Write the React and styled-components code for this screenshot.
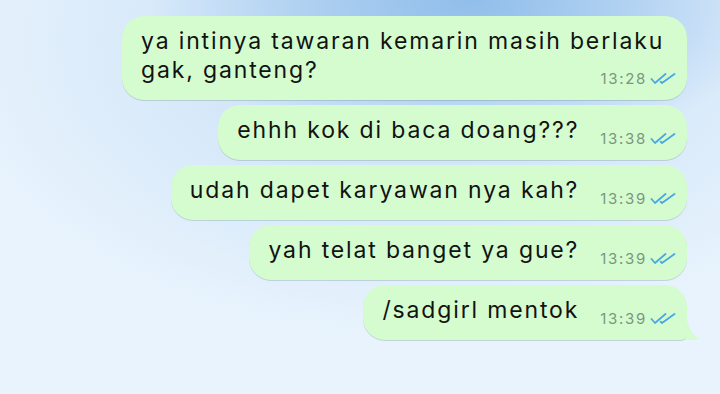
import React from "react";
import styled, { createGlobalStyle } from "styled-components";

const Global = createGlobalStyle`
  html, body { margin: 0; padding: 0; }
  body {
    width: 720px;
    height: 394px;
    overflow: hidden;
    font-family: Inter, "Noto Sans", "Liberation Sans", sans-serif;
  }
`;

const Screen = styled.div`
  width: 720px;
  height: 394px;
  box-sizing: border-box;
  padding: 16px 33px 0 0;
  display: flex;
  flex-direction: column;
  align-items: flex-end;
  gap: 5px;
  background:
    radial-gradient(ellipse 320px 150px at 470px 0px, rgba(138, 186, 233, 0.9), rgba(138, 186, 233, 0) 100%),
    radial-gradient(ellipse 480px 300px at 420px 40px, rgba(165, 203, 240, 0.55), rgba(165, 203, 240, 0) 100%),
    #e8f3fd;
`;

const Bubble = styled.div`
  position: relative;
  box-sizing: border-box;
  max-width: 565px;
  display: flow-root;
  padding: 11px 11px 12px 19px;
  background: #d4fccf;
  border-radius: ${(p) => (p.$tail ? "22px 22px 6px 22px" : "22px")};
  box-shadow: 0 1px 0.5px rgba(60, 110, 90, 0.22);
  color: #121212;
  font-size: 23px;
  line-height: 29px;
  letter-spacing: 1.85px;
`;

const Meta = styled.span`
  float: right;
  display: inline-flex;
  align-items: center;
  gap: 3px;
  margin: 14px 0 0 21px;
  font-size: 15px;
  line-height: 18px;
  color: #7b9680;
  letter-spacing: 1.7px;
`;

const Tail = styled.svg`
  position: absolute;
  right: -13px;
  bottom: 0;
  width: 14px;
  height: 28px;
  overflow: visible;
`;

const Ticks = () => (
  <svg width="26" height="12" viewBox="0 0 26 12" fill="none">
    <path d="M1.5 6 L5 10 L15.5 1" stroke="#4aa9e2" strokeWidth="1.8" strokeLinecap="round" strokeLinejoin="round" />
    <path d="M10.6 8.6 L12 10 L24.5 1" stroke="#4aa9e2" strokeWidth="1.8" strokeLinecap="round" strokeLinejoin="round" />
  </svg>
);

const messages = [
  { text: "ya intinya tawaran kemarin masih berlaku gak, ganteng?", time: "13:28" },
  { text: "ehhh kok di baca doang???", time: "13:38" },
  { text: "udah dapet karyawan nya kah?", time: "13:39" },
  { text: "yah telat banget ya gue?", time: "13:39" },
  { text: "/sadgirl mentok", time: "13:39", tail: true },
];

export default function App() {
  return (
    <>
      <Global />
      <Screen>
        {messages.map((m, i) => (
          <Bubble key={i} $tail={m.tail}>
            {m.text}
            <Meta>
              {m.time}
              <Ticks />
            </Meta>
            {m.tail && (
              <Tail viewBox="0 0 14 28">
                <path d="M0 0 C1 13 5 22 13.5 27 C9 28.3 4 28 0 28 Z" fill="#d4fccf" />
              </Tail>
            )}
          </Bubble>
        ))}
      </Screen>
    </>
  );
}
